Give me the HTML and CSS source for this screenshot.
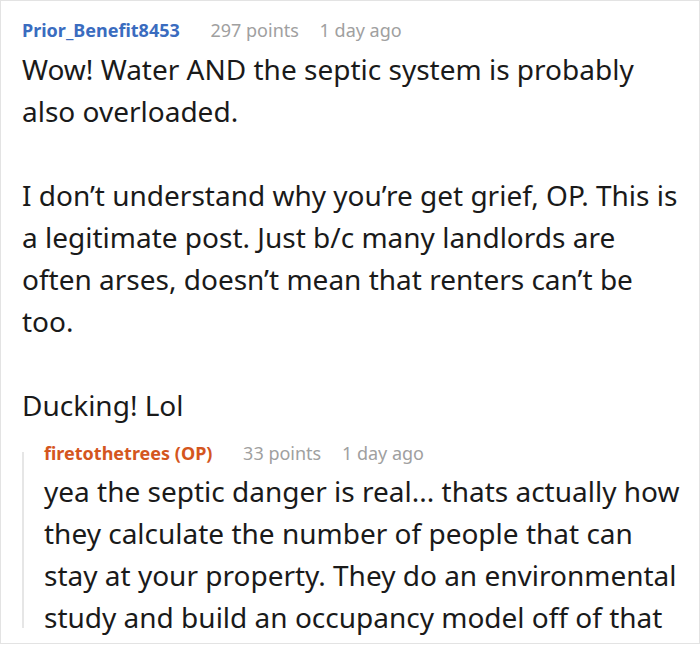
FILE: index.html
```html
<!DOCTYPE html>
<html lang="en">
<head>
    <meta charset="UTF-8">
    <title>Comment thread</title>
    <link rel="stylesheet" href="styles.css">
</head>
<body>
    <div class="thread">
        <div class="comment">
            <div class="comment-head">
                <span class="author">Prior_Benefit8453</span>
                <span class="points">297 points</span>
                <span class="time">1 day ago</span>
            </div>
            <div class="comment-body">
                <p>Wow! Water AND the septic system is probably also overloaded.</p>
                <p>I don’t understand why you’re get grief, OP. This is a legitimate post. Just b/c many landlords are often arses, doesn’t mean that renters can’t be too.</p>
                <p>Ducking! Lol</p>
            </div>

            <div class="reply">
                <div class="comment-head">
                    <span class="author op">firetothetrees (OP)</span>
                    <span class="points">33 points</span>
                    <span class="time">1 day ago</span>
                </div>
                <div class="comment-body">
                    <p>yea the septic danger is real... thats actually how they calculate the number of people that can stay at your property. They do an environmental study and build an occupancy model off of that</p>
                </div>
            </div>
        </div>
    </div>
</body>
</html>
```

FILE: styles.css
```css
body {
    margin: 0;
    background: #fff;
    font-family: 'Noto Sans', 'Open Sans', sans-serif;
}

.thread {
    box-sizing: border-box;
    width: 700px;
    height: 644px;
    border: 1px solid #e3e3e3;
    padding: 17px 18px 0 21px;
    overflow: hidden;
}

.comment-head {
    font-size: 18px;
    line-height: 24px;
    margin-bottom: 6px;
    white-space: nowrap;
}

.author {
    font-weight: bold;
    color: #3a6cbf;
    margin-right: 26px;
}

.author.op {
    color: #d4561e;
}

.points {
    color: #a0a0a0;
    margin-right: 16px;
}

.time {
    color: #a0a0a0;
}

.comment-body {
    font-size: 28px;
    line-height: 42px;
    color: #1a1a1a;
}

.comment-body p {
    margin: 0 0 42px;
}

.comment-body p:last-child {
    margin-bottom: 0;
}

/* nested reply with thread line */
.reply {
    position: relative;
    margin-top: 15px;
    padding-left: 22px;
}

.reply::before {
    content: '';
    position: absolute;
    left: 0;
    top: 11px;
    bottom: 10px;
    width: 2px;
    background: #e6e6e6;
}

.reply .comment-head {
    margin-bottom: 5px;
}
```
